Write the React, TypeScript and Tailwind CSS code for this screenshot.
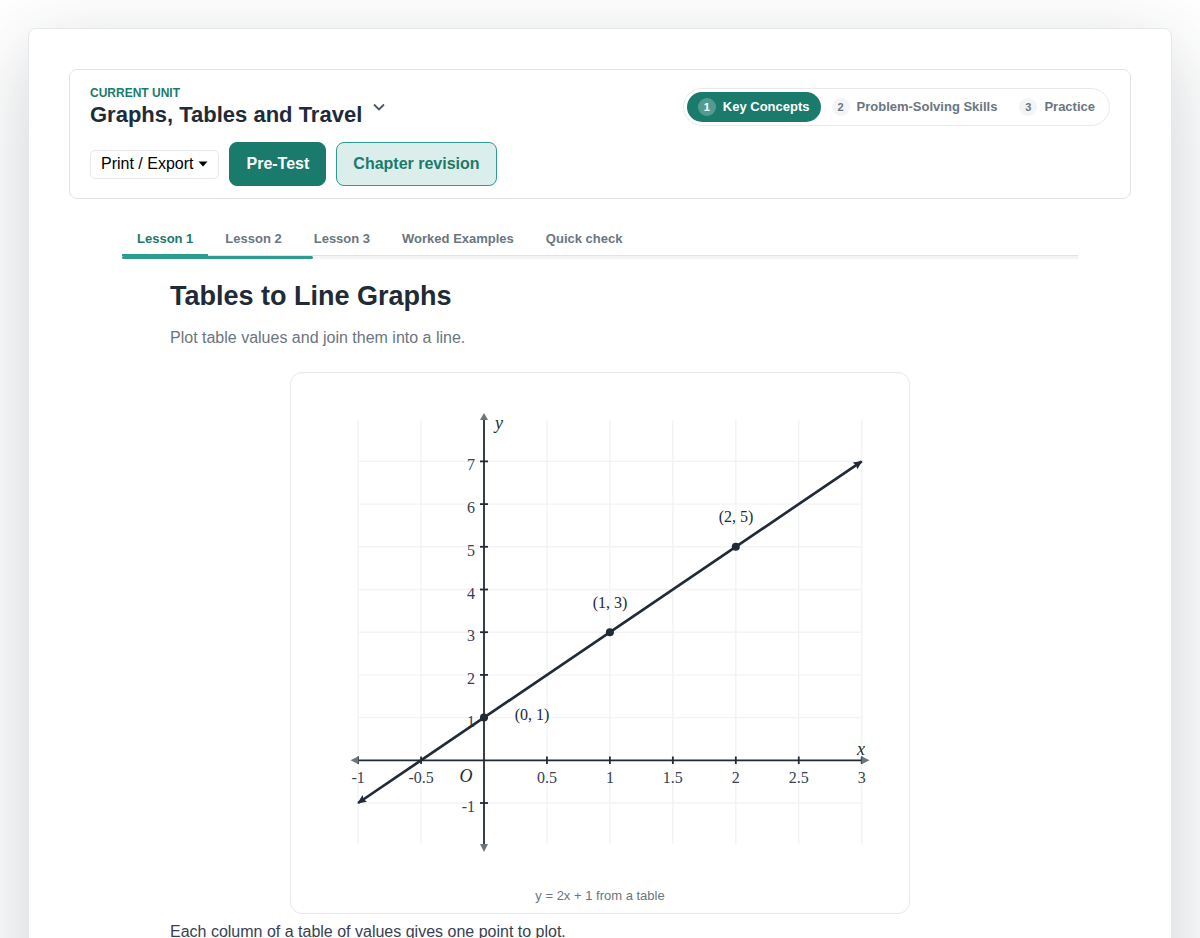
import React from "react";

const steps = ["Key Concepts", "Problem-Solving Skills", "Practice"];
const tabs = ["Lesson 1", "Lesson 2", "Lesson 3", "Worked Examples", "Quick check"];

const toX = (x: number) => 173 + 125.9 * x;
const toY = (y: number) => 367.3 - 42.7 * y;

const xTicks = [-1, -0.5, 0.5, 1, 1.5, 2, 2.5, 3];
const yTicks = [-1, 1, 2, 3, 4, 5, 6, 7];
const points = [
  { x: 0, y: 1, lx: 221, ly: 327 },
  { x: 1, y: 3, lx: 299, ly: 215 },
  { x: 2, y: 5, lx: 425, ly: 129 },
];

function LineGraph() {
  return (
    <svg
      viewBox="0 0 578 480"
      role="img"
      aria-label="Line graph"
      className="block w-full font-['Liberation_Serif',serif]"
    >
      <defs>
        <marker id="arrow" viewBox="0 0 10 10" refX="9" refY="5" markerWidth="10" markerHeight="9" markerUnits="userSpaceOnUse" orient="auto-start-reverse">
          <path d="M0 0.5 L10 5 L0 9.5 L1.5 5 Z" fill="#212b38" />
        </marker>
      </defs>
      <g stroke="#f2f3f4" strokeWidth="1.4">
        {xTicks.map((t) => (
          <line key={t} x1={toX(t)} x2={toX(t)} y1="27" y2="451" />
        ))}
        {yTicks.map((t) => (
          <line key={t} x1={toX(-1)} x2={toX(3)} y1={toY(t)} y2={toY(t)} />
        ))}
      </g>
      <g stroke="#212b38" strokeWidth="1.8">
        <line x1="47" x2="551" y1={toY(0)} y2={toY(0)} />
        <line x1="173" x2="173" y1="27" y2="452" />
        {xTicks.map((t) => (
          <line key={t} x1={toX(t)} x2={toX(t)} y1="363.5" y2="371" />
        ))}
        {yTicks.map((t) => (
          <line key={t} x1="169" x2="177" y1={toY(t)} y2={toY(t)} />
        ))}
      </g>
      <g fill="#6b7580">
        <path d="M173 20 L177 27 H169 Z" />
        <path d="M173 459 L177 451 H169 Z" />
        <path d="M39.5 367.3 L47.5 363.3 V371.3 Z" />
        <path d="M558.5 367.3 L550.5 363.3 V371.3 Z" />
      </g>
      <g fill="#374151" fontSize="16">
        {xTicks.map((t) => (
          <text key={t} x={toX(t)} y="390" textAnchor="middle">{t}</text>
        ))}
        {yTicks.map((t) => (
          <text key={t} x="164" y={toY(t) + 9} textAnchor="end">{t}</text>
        ))}
      </g>
      <line x1={toX(-1)} y1={toY(-1)} x2={toX(3)} y2={toY(7)} stroke="#212b38" strokeWidth="2.7" markerStart="url(#arrow)" markerEnd="url(#arrow)" />
      {points.map((p) => (
        <g key={p.x} fill="#212b38">
          <circle cx={toX(p.x)} cy={toY(p.y)} r="4" />
          <text x={p.lx} y={p.ly} fontSize="16" textAnchor="middle">{`(${p.x}, ${p.y})`}</text>
        </g>
      ))}
      <g fill="#212b38" fontSize="18" fontStyle="italic" textAnchor="middle">
        <text x="188" y="36">y</text>
        <text x="550" y="362">x</text>
        <text x="155" y="389">O</text>
      </g>
    </svg>
  );
}

export default function App() {
  return (
    <div className="h-screen overflow-hidden bg-white p-7 font-['Liberation_Sans',Arial,sans-serif] text-[#212b38]">
      <div className="rounded-lg border border-[#e5e7eb] bg-white px-10 pt-10 pb-40 shadow-[0_24px_80px_rgba(31,41,55,0.22)]">
        <header className="flex items-start justify-between rounded-lg border border-[#e1e3e6] px-5 pt-[18px] pb-3">
          <div>
            <p className="mt-[-3px] text-xs leading-4 font-bold text-[#1a7a6c]">CURRENT UNIT</p>
            <button type="button" className="flex items-center gap-2.5 text-left">
              <h1 className="text-[22px] leading-7 font-bold">Graphs, Tables and Travel</h1>
              <svg viewBox="0 0 14 14" className="mb-3.5 size-3.5" fill="none" stroke="#4b5563" strokeWidth="1.8" aria-hidden="true">
                <path d="M2 3.5 L7 8.5 L12 3.5" />
              </svg>
            </button>
            <div className="mt-[13px] flex items-center gap-2.5">
              <button type="button" className="flex h-[29px] items-center gap-[5px] rounded-[5px] border border-[#e5e7eb] px-2.5 text-base text-black">
                Print / Export
                <svg viewBox="0 0 10 6" className="h-1.5 w-2.5" aria-hidden="true">
                  <path d="M0.5 0.5 H9.5 L5 5.5 Z" fill="currentColor" />
                </svg>
              </button>
              <button type="button" className="h-11 rounded-lg border border-[#1a7a6c] bg-[#1a7a6c] px-4 text-base font-bold text-white">Pre-Test</button>
              <button type="button" className="h-11 rounded-lg border border-[#2a9d8f] bg-[#dceeec] px-4 text-base font-bold text-[#1a7a6c]">Chapter revision</button>
            </div>
          </div>
          <nav aria-label="Unit sections" className="flex rounded-full border border-[#e8eaec] p-[3px]">
            {steps.map((step, i) => (
              <button
                key={step}
                type="button"
                className={
                  i === 0
                    ? "flex h-[30px] items-center gap-[7px] rounded-full bg-[#1a7a6c] px-[11px] text-[13px] font-bold text-white"
                    : "flex h-[30px] items-center gap-[7px] rounded-full px-[11px] text-[13px] font-bold text-[#6b7580]"
                }
              >
                <span
                  className={
                    i === 0
                      ? "flex size-[18px] items-center justify-center rounded-full bg-white/25 text-[11px]"
                      : "flex size-[18px] items-center justify-center rounded-full bg-[#f3f4f6] text-[11px]"
                  }
                >
                  {i + 1}
                </span>
                {step}
              </button>
            ))}
          </nav>
        </header>

        <main className="mx-auto mt-5 w-full max-w-[956px]">
          <nav aria-label="Lessons" className="flex gap-0.5 border-b border-[#e1e3e6]">
            {tabs.map((tab, i) => (
              <button
                key={tab}
                type="button"
                className={
                  i === 0
                    ? "-mb-px h-[37px] border-b-2 border-[#2a9d8f] px-[15px] pt-1 text-[13px] font-bold text-[#1a7a6c]"
                    : "-mb-px h-[37px] border-b-2 border-transparent px-[15px] pt-1 text-[13px] font-bold text-[#6b7580]"
                }
              >
                {tab}
              </button>
            ))}
          </nav>
          <div className="h-[3px] bg-[#f3f4f6]">
            <div className="h-full w-1/5 rounded-full bg-[#2a9d8f]" />
          </div>

          <article className="px-12">
            <h2 className="mt-[19px] text-[27px] leading-9 font-bold">Tables to Line Graphs</h2>
            <p className="mt-3 text-base text-[#6b7580]">Plot table values and join them into a line.</p>
            <figure className="mx-auto mt-[22px] max-w-[620px] rounded-xl border border-[#e5e7eb] px-5 pt-5 pb-[7px]">
              <LineGraph />
              <figcaption className="mt-[13px] text-center text-[13px] leading-5 text-[#6b7580]">y = 2x + 1 from a table</figcaption>
            </figure>
            <p className="mt-1.5 text-base text-[#374151]">Each column of a table of values gives one point to plot.</p>
          </article>
        </main>
      </div>
    </div>
  );
}
